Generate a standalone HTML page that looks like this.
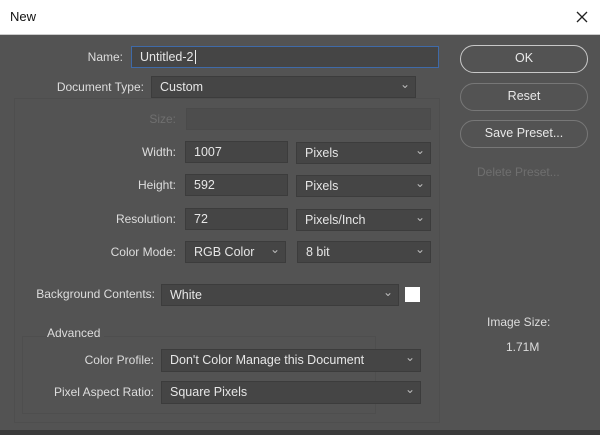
<!DOCTYPE html>
<html><head><style>
body{margin:0;width:600px;height:435px;background:#535353;font-family:"Liberation Sans",sans-serif;font-size:12px;color:#ddd;position:relative;overflow:hidden}
.a{position:absolute}
.t{position:absolute;line-height:22px;white-space:nowrap}
.l{text-align:right}
.f{position:absolute;background:#454545;border:1px solid #3c3c3c;box-sizing:border-box;color:#e6e6e6;padding-left:8px;line-height:20px;white-space:nowrap;overflow:hidden;font-size:12.5px}
.s::after{content:"⌄";position:absolute;right:5px;top:-3px;font-size:12px;color:#bbb}
.b{position:absolute;border:1.5px solid #aaa;border-radius:14px;box-sizing:border-box;text-align:center;color:#e8e8e8;font-size:12.5px}
</style></head><body>
<div class="a" style="left:0;top:0;width:600px;height:34px;background:#fff;border-bottom:1px solid #ccc"></div>
<div class="t" style="left:10px;top:6px;color:#111;font-size:13px">New</div>
<svg class="a" style="left:576px;top:11px" width="12" height="12"><path d="M1 1L11 11M11 1L1 11" stroke="#222" stroke-width="1.3"/></svg>
<div class="a" style="left:0;top:430px;width:600px;height:5px;background:#3a3a3a"></div>
<div class="a" style="left:14px;top:98px;width:426px;height:325px;border:1px solid #4e4e4e;box-sizing:border-box"></div>
<div class="a" style="left:22px;top:336px;width:354px;height:78px;border:1px solid #4e4e4e;box-sizing:border-box"></div>

<div class="t l" style="right:477px;top:46px">Name:</div>
<div class="f" style="left:131px;top:46px;width:308px;height:22px;border:1px solid #3f6aa8">Untitled-2<span style="border-left:1px solid #eee;margin-left:1px"></span></div>
<div class="t l" style="right:456px;top:76px">Document Type:</div>
<div class="f s" style="left:151px;top:76px;width:265px;height:22px">Custom</div>
<div class="t l" style="right:424px;top:108px;color:#6f6f6f">Size:</div>
<div class="f" style="left:186px;top:108px;width:245px;height:22px;background:#4d4d4d;border-color:#4a4a4a"></div>

<div class="t l" style="right:424px;top:141px">Width:</div>
<div class="f" style="left:185px;top:141px;width:103px;height:22px">1007</div>
<div class="f s" style="left:296px;top:142px;width:135px;height:22px">Pixels</div>
<div class="t l" style="right:424px;top:174px">Height:</div>
<div class="f" style="left:185px;top:174px;width:103px;height:22px">592</div>
<div class="f s" style="left:296px;top:175px;width:135px;height:22px">Pixels</div>
<div class="t l" style="right:424px;top:208px">Resolution:</div>
<div class="f" style="left:185px;top:208px;width:103px;height:22px">72</div>
<div class="f s" style="left:296px;top:209px;width:135px;height:22px">Pixels/Inch</div>
<div class="t l" style="right:424px;top:241px">Color Mode:</div>
<div class="f s" style="left:185px;top:241px;width:101px;height:22px">RGB Color</div>
<div class="f s" style="left:297px;top:241px;width:134px;height:22px">8 bit</div>

<div class="t l" style="right:445px;top:283px">Background Contents:</div>
<div class="f s" style="left:161px;top:284px;width:238px;height:22px">White</div>
<div class="a" style="left:405px;top:287px;width:15px;height:15px;background:#fff"></div>

<div class="t" style="left:47px;top:322px;background:#535353;padding-right:4px">Advanced</div>
<div class="t l" style="right:446px;top:349px">Color Profile:</div>
<div class="f s" style="left:161px;top:349px;width:260px;height:23px">Don't Color Manage this Document</div>
<div class="t l" style="right:446px;top:381px">Pixel Aspect Ratio:</div>
<div class="f s" style="left:161px;top:381px;width:260px;height:23px">Square Pixels</div>

<div class="b" style="left:460px;top:45px;width:128px;height:28px;line-height:25px;border-color:#c8c8c8">OK</div>
<div class="b" style="left:460px;top:83px;width:128px;height:28px;line-height:25px;border-color:#777">Reset</div>
<div class="b" style="left:460px;top:120px;width:128px;height:28px;line-height:25px;border-color:#777">Save Preset...</div>
<div class="t" style="left:477px;top:161px;color:#6f6f6f">Delete Preset...</div>
<div class="t" style="left:487px;top:311px">Image Size:</div>
<div class="t" style="left:506px;top:336px">1.71M</div>
</body></html>
